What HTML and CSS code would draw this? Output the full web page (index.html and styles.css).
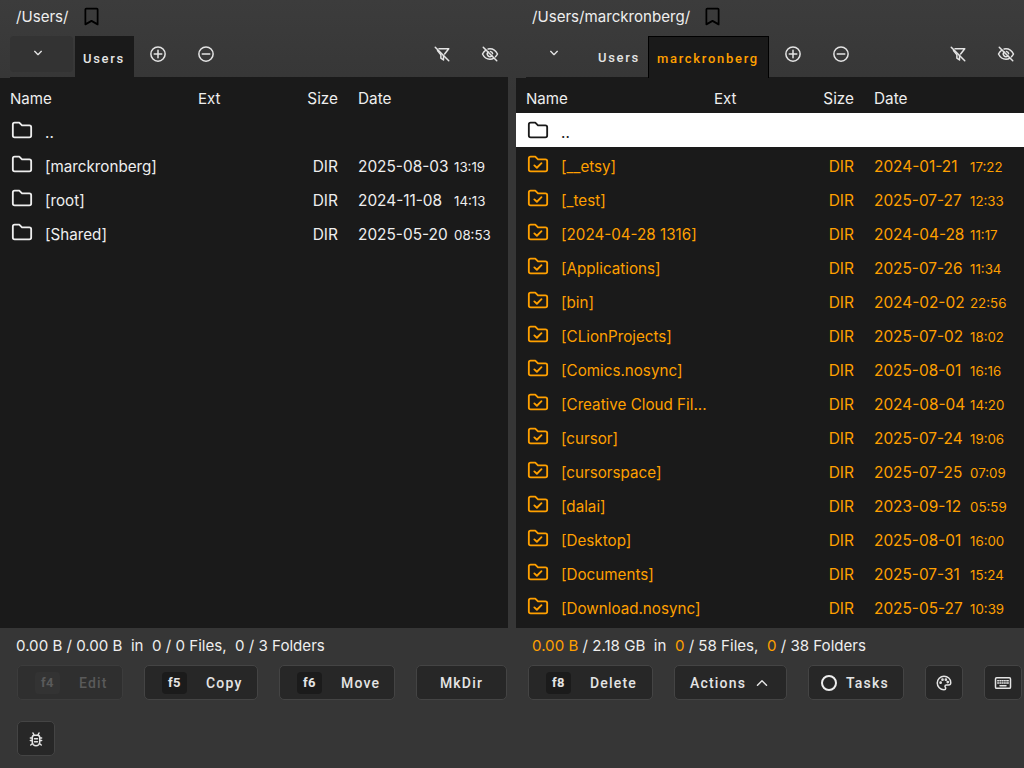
FILE: index.html
```html
<!DOCTYPE html>
<html>
<head>
  <meta charset="utf-8">
  <title>File Manager</title>
  <link rel="stylesheet" href="styles.css">
</head>

<body>
  <svg class="sprite" width="0" height="0">
    <symbol id="i-folder" viewBox="0 0 24 24"><path d="M4 4h5l3 3h8a2 2 0 0 1 2 2v9a2 2 0 0 1-2 2H4a2 2 0 0 1-2-2V6a2 2 0 0 1 2-2z"/></symbol>
    <symbol id="i-folder-check" viewBox="0 0 24 24"><path d="M4 4h5l3 3h8a2 2 0 0 1 2 2v9a2 2 0 0 1-2 2H4a2 2 0 0 1-2-2V6a2 2 0 0 1 2-2z"/><path d="M8 13.500l2.800 2.600 5-5"/></symbol>
    <symbol id="i-bookmark" viewBox="0 0 24 24"><path d="M6 3h12a1 1 0 0 1 1 1v17l-7-4-7 4V4a1 1 0 0 1 1-1z"/></symbol>
    <symbol id="i-plus" viewBox="0 0 24 24"><circle cx="12" cy="12" r="9.500"/><path d="M12 7v10M7 12h10"/></symbol>
    <symbol id="i-minus" viewBox="0 0 24 24"><circle cx="12" cy="12" r="9.500"/><path d="M7 12h10"/></symbol>
    <symbol id="i-filter-off" viewBox="0 0 24 24"><path d="M8 5h13l-5.500 7M6 7.500l4.500 5.500v4.500l3.500 2.500v-6"/><path d="M3 3l18 18"/></symbol>
    <symbol id="i-eye-off" viewBox="0 0 24 24"><path d="M6.500 6.800C4.500 8 3 10 2 12c2 4 5.500 7 10 7 2 0 3.800-.6 5.300-1.600M9.500 5.300c.8-.2 1.600-.3 2.500-.3 4.500 0 8 3 10 7-.7 1.400-1.600 2.600-2.700 3.700"/><path d="M9.500 9.500a3.500 3.500 0 0 0 5 5M12.500 8.600a3.500 3.500 0 0 1 3 3"/><path d="M3 3l18 18"/></symbol>
    <symbol id="i-chevron-down" viewBox="0 0 24 24"><path d="M7 9.500l5 5 5-5"/></symbol>
    <symbol id="i-chevron-up" viewBox="0 0 24 24"><path d="M6 15l6-6 6 6"/></symbol>
    <symbol id="i-palette" viewBox="0 0 24 24"><path d="M12 3a9 9 0 0 0 0 18c1.500 0 2.300-1 2.300-2.100 0-1.300-1-1.600-1-2.700 0-1 .8-1.700 1.800-1.700H18c1.800 0 3-1.300 3-3C21 6.500 17 3 12 3z"/><circle cx="7.500" cy="11.500" r=".8"/><circle cx="10" cy="7.500" r=".8"/><circle cx="14.500" cy="7.500" r=".8"/><circle cx="17" cy="10.800" r=".8"/></symbol>
    <symbol id="i-keyboard" viewBox="0 0 24 24"><rect x="2" y="5" width="20" height="14" rx="1.500"/><path d="M5 9h1M8 9h1M11 9h1M14 9h1M17 9h2M5 12h1M8 12h1M11 12h1M14 12h1M17 12h2M8 15.500h8"/></symbol>
    <symbol id="i-bug" viewBox="0 0 24 24"><path d="M10 7h4a3 3 0 0 1 3 3v6a5 5 0 0 1-10 0v-6a3 3 0 0 1 3-3z"/><path d="M9.500 7 8 4M14.500 7 16 4M7 10.500H4.500M19.500 10.500H17M7 14H4.500M19.500 14H17M7.500 18 5 20M16.500 18l2.500 2M10 11.500h4M10 15.500h4"/></symbol>
  </svg>

  <div class="panes">
    <section class="pane">
      <div class="pathbar">
        <span>/Users/</span>
        <svg class="icon bookmark"><use href="#i-bookmark"/></svg>
      </div>
      <div class="tabbar">
        <button class="drop drop-on"><svg class="icon chev"><use href="#i-chevron-down"/></svg></button>
        <span class="tab tab-on">Users</span>
        <button class="tool first"><svg class="icon"><use href="#i-plus"/></svg></button>
        <button class="tool"><svg class="icon"><use href="#i-minus"/></svg></button>
        <button class="tool push"><svg class="icon"><use href="#i-filter-off"/></svg></button>
        <button class="tool"><svg class="icon"><use href="#i-eye-off"/></svg></button>
      </div>
      <div class="list">
        <div class="row head">
          <span class="name-head">Name</span><span class="ext">Ext</span><span class="size">Size</span><span class="date">Date</span>
        </div>
        <div class="row"><svg class="folder"><use href="#i-folder"/></svg><span class="name">..</span></div>
        <div class="row"><svg class="folder"><use href="#i-folder"/></svg><span class="name">[marckronberg]</span><span class="ext"></span><span class="size">DIR</span><span class="date">2025-08-03</span><span class="time">13:19</span></div>
        <div class="row"><svg class="folder"><use href="#i-folder"/></svg><span class="name">[root]</span><span class="ext"></span><span class="size">DIR</span><span class="date">2024-11-08</span><span class="time">14:13</span></div>
        <div class="row"><svg class="folder"><use href="#i-folder"/></svg><span class="name">[Shared]</span><span class="ext"></span><span class="size">DIR</span><span class="date">2025-05-20</span><span class="time">08:53</span></div>
      </div>
      <div class="stats">0.00 B / 0.00 B &nbsp;in &nbsp;0 / 0 Files, &nbsp;0 / 3 Folders</div>
    </section>

    <section class="pane">
      <div class="pathbar">
        <span>/Users/marckronberg/</span>
        <svg class="icon bookmark"><use href="#i-bookmark"/></svg>
      </div>
      <div class="tabbar">
        <button class="drop"><svg class="icon chev"><use href="#i-chevron-down"/></svg></button>
        <span class="tab tab-plain">Users</span>
        <span class="tab tab-focus">marckronberg</span>
        <button class="tool first"><svg class="icon"><use href="#i-plus"/></svg></button>
        <button class="tool"><svg class="icon"><use href="#i-minus"/></svg></button>
        <button class="tool push"><svg class="icon"><use href="#i-filter-off"/></svg></button>
        <button class="tool"><svg class="icon"><use href="#i-eye-off"/></svg></button>
      </div>
      <div class="list">
        <div class="row head">
          <span class="name-head">Name</span><span class="ext">Ext</span><span class="size">Size</span><span class="date">Date</span>
        </div>
        <div class="row cursor"><svg class="folder"><use href="#i-folder"/></svg><span class="name">..</span></div>
        <div class="row picked"><svg class="folder"><use href="#i-folder-check"/></svg><span class="name">[__etsy]</span><span class="ext"></span><span class="size">DIR</span><span class="date">2024-01-21</span><span class="time">17:22</span></div>
        <div class="row picked"><svg class="folder"><use href="#i-folder-check"/></svg><span class="name">[_test]</span><span class="ext"></span><span class="size">DIR</span><span class="date">2025-07-27</span><span class="time">12:33</span></div>
        <div class="row picked"><svg class="folder"><use href="#i-folder-check"/></svg><span class="name">[2024-04-28 1316]</span><span class="ext"></span><span class="size">DIR</span><span class="date">2024-04-28</span><span class="time">11:17</span></div>
        <div class="row picked"><svg class="folder"><use href="#i-folder-check"/></svg><span class="name">[Applications]</span><span class="ext"></span><span class="size">DIR</span><span class="date">2025-07-26</span><span class="time">11:34</span></div>
        <div class="row picked"><svg class="folder"><use href="#i-folder-check"/></svg><span class="name">[bin]</span><span class="ext"></span><span class="size">DIR</span><span class="date">2024-02-02</span><span class="time">22:56</span></div>
        <div class="row picked"><svg class="folder"><use href="#i-folder-check"/></svg><span class="name">[CLionProjects]</span><span class="ext"></span><span class="size">DIR</span><span class="date">2025-07-02</span><span class="time">18:02</span></div>
        <div class="row picked"><svg class="folder"><use href="#i-folder-check"/></svg><span class="name">[Comics.nosync]</span><span class="ext"></span><span class="size">DIR</span><span class="date">2025-08-01</span><span class="time">16:16</span></div>
        <div class="row picked"><svg class="folder"><use href="#i-folder-check"/></svg><span class="name">[Creative Cloud Fil...</span><span class="ext"></span><span class="size">DIR</span><span class="date">2024-08-04</span><span class="time">14:20</span></div>
        <div class="row picked"><svg class="folder"><use href="#i-folder-check"/></svg><span class="name">[cursor]</span><span class="ext"></span><span class="size">DIR</span><span class="date">2025-07-24</span><span class="time">19:06</span></div>
        <div class="row picked"><svg class="folder"><use href="#i-folder-check"/></svg><span class="name">[cursorspace]</span><span class="ext"></span><span class="size">DIR</span><span class="date">2025-07-25</span><span class="time">07:09</span></div>
        <div class="row picked"><svg class="folder"><use href="#i-folder-check"/></svg><span class="name">[dalai]</span><span class="ext"></span><span class="size">DIR</span><span class="date">2023-09-12</span><span class="time">05:59</span></div>
        <div class="row picked"><svg class="folder"><use href="#i-folder-check"/></svg><span class="name">[Desktop]</span><span class="ext"></span><span class="size">DIR</span><span class="date">2025-08-01</span><span class="time">16:00</span></div>
        <div class="row picked"><svg class="folder"><use href="#i-folder-check"/></svg><span class="name">[Documents]</span><span class="ext"></span><span class="size">DIR</span><span class="date">2025-07-31</span><span class="time">15:24</span></div>
        <div class="row picked"><svg class="folder"><use href="#i-folder-check"/></svg><span class="name">[Download.nosync]</span><span class="ext"></span><span class="size">DIR</span><span class="date">2025-05-27</span><span class="time">10:39</span></div>
      </div>
      <div class="stats"><b>0.00 B</b> / 2.18 GB &nbsp;in &nbsp;<b>0</b> / 58 Files, &nbsp;<b>0</b> / 38 Folders</div>
    </section>
  </div>

  <div class="actions">
    <button class="btn btn-edit off"><kbd>f4</kbd>Edit</button>
    <button class="btn btn-copy"><kbd>f5</kbd>Copy</button>
    <button class="btn btn-move"><kbd>f6</kbd>Move</button>
    <button class="btn btn-mkdir">MkDir</button>
    <button class="btn btn-delete"><kbd>f8</kbd>Delete</button>
    <button class="btn btn-actions">Actions<svg class="icon"><use href="#i-chevron-up"/></svg></button>
    <button class="btn btn-tasks"><span class="ring"></span>Tasks</button>
    <button class="btn square"><svg class="icon"><use href="#i-palette"/></svg></button>
    <button class="btn square"><svg class="icon"><use href="#i-keyboard"/></svg></button>
    <button class="btn square"><svg class="icon"><use href="#i-bug"/></svg></button>
  </div>
</body>
</html>
```

FILE: styles.css
```css
* {
    box-sizing: border-box;
}

body {
    margin: 0;
    height: 768px;
    overflow: hidden;
    background: linear-gradient(#3c3c3c, #363636 90px);
    color: #eee;
    font-family: Inter, "Liberation Sans", sans-serif;
    font-size: 15.1px;
}

.sprite {
    position: absolute;
}

svg {
    fill: none;
    stroke: currentColor;
    stroke-width: 2;
    stroke-linecap: round;
    stroke-linejoin: round;
}

button {
    font-family: Roboto, sans-serif;
    color: #e4e4e4;
    background: none;
    border: none;
    padding: 0;
}

.panes {
    display: flex;
    gap: 8px;
    height: 662px;
}

.pane {
    width: 508px;
    display: flex;
    flex-direction: column;
}

.pathbar {
    height: 32px;
    margin-bottom: 4px;
    flex: none;
    padding-left: 16px;
    display: flex;
    align-items: center;
    gap: 12px;
}

.icon {
    width: 18px;
    height: 18px;
}

.bookmark {
    color: #000;
    width: 21px;
    height: 21px;
}

.tabbar {
    height: 42px;
    flex: none;
    margin-left: 10px;
    display: flex;
    border-bottom: 1px solid #1a1a1a;
}

.drop {
    width: 63px;
    height: 36px;
    border-radius: 4px;
    margin-right: 2px;
    padding-right: 7px;
}

.drop-on {
    background: #333;
}

.chev {
    width: 16px;
    height: 16px;
}

.tab {
    font-family: Roboto, sans-serif;
    font-size: 13px;
    font-weight: 500;
    letter-spacing: 1.7px;
    padding: 14px 8px 0;
    color: #e4e4e4;
}

.tab-on {
    background: #1a1a1a;
    margin-bottom: -1px;
    padding: 15px 9px 0 8px;
}

.tab-plain {
    margin-left: -1px;
}

.tab-focus {
    background: #1a1a1a;
    color: #ffa000;
    margin-bottom: -1px;
    padding-right: 9px;
    border: 1px solid #000;
    border-bottom: none;
}

.tool {
    width: 36px;
    height: 36px;
    margin-left: 12px;
    display: flex;
    align-items: center;
    justify-content: center;
}

.tool.first {
    margin-left: 6px;
}

.tool.push {
    margin-left: auto;
}

.list {
    flex: 1;
    background: #1a1a1a;
    overflow: hidden;
}

.row {
    display: grid;
    grid-template-columns: 45px 145px 108px 40px 20px 96px auto;
    height: 34px;
    align-items: center;
    line-height: 18px;
}

.row > span {
    padding-top: 6px;
}

.head {
    height: 35px;
}

.name-head {
    grid-column: 1 / span 2;
    padding-left: 10px;
}

.ext {
    padding-left: 8px;
}

.size {
    text-align: right;
    font-size: 15.5px;
}

.date {
    grid-column: 6;
    font-size: 15.4px;
    white-space: nowrap;
}

.head .size,
.head .date {
    font-size: 15.3px;
}

.time {
    font-size: 13.3px;
}

.name {
    font-size: 15.2px;
    white-space: nowrap;
}

.folder {
    width: 22px;
    height: 22px;
    margin-left: 11px;
}

.cursor {
    background: #fff;
    color: #1a1a1a;
}

.picked {
    color: #ffa000;
}

.stats {
    height: 34px;
    flex: none;
    padding-left: 16px;
    display: flex;
    align-items: center;
    white-space: pre;
}

.stats b {
    font-weight: 400;
    color: #ffa000;
}

.actions {
    display: flex;
    flex-wrap: wrap;
    gap: 21px;
    padding: 3px 0 0 17px;
}

.btn {
    height: 35px;
    padding: 0 0 0 17px;
    display: flex;
    align-items: center;
    gap: 19px;
    background: #272727;
    border: 1px solid #444;
    border-radius: 5px;
    font-size: 14px;
    font-weight: 500;
    letter-spacing: 1.2px;
}

kbd {
    width: 25px;
    height: 22px;
    display: flex;
    align-items: center;
    justify-content: center;
    background: #1b1b1b;
    border-radius: 4px;
    font-family: Roboto, sans-serif;
    font-size: 13px;
    font-weight: 700;
    letter-spacing: .5px;
}

.off {
    color: #5a5a5a;
    background: #2f2f2f;
    border-color: #3c3c3c;
}

.off kbd {
    background: #333;
}

.btn-edit {
    width: 106px;
}

.btn-copy {
    width: 114px;
}

.btn-move {
    width: 116px;
}

.btn-mkdir {
    width: 91px;
    padding: 0;
    justify-content: center;
}

.btn-delete {
    width: 125px;
}

.btn-actions {
    width: 113px;
    padding-left: 15px;
    gap: 7px;
}

.btn-tasks {
    width: 96px;
    padding-left: 12px;
    gap: 9px;
}

.ring {
    width: 16px;
    height: 16px;
    border: 2px solid #eee;
    border-radius: 50%;
}

.square {
    width: 38px;
    padding: 0;
    justify-content: center;
}
```
